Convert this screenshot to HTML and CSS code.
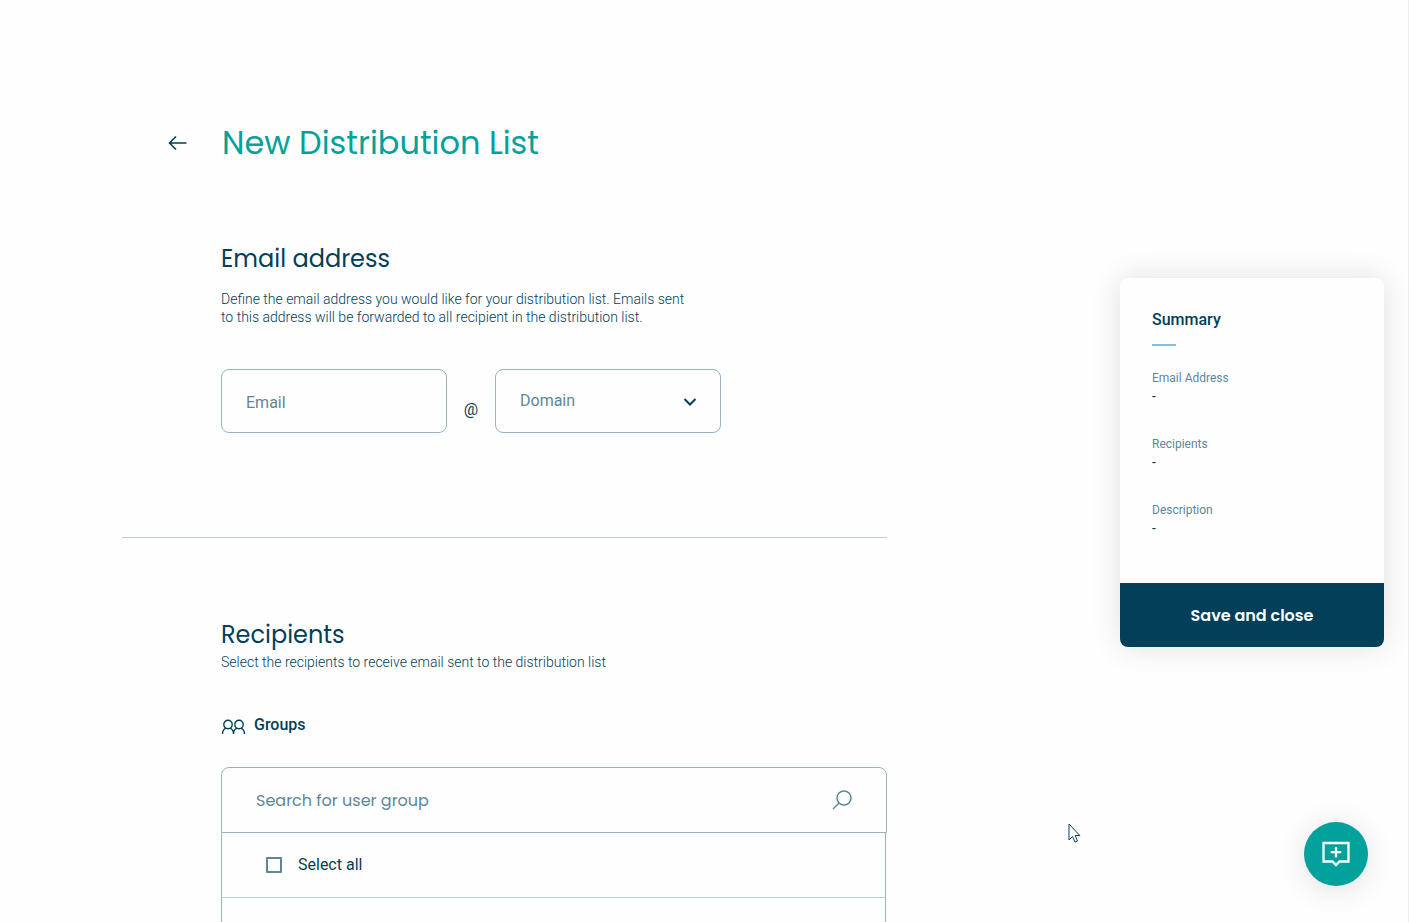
FILE: index.html
```html
<!DOCTYPE html>
<html lang="en">
<head>
    <meta charset="UTF-8">
    <meta name="viewport" content="width=device-width, initial-scale=1.0">
    <title>New Distribution List</title>
    <link rel="stylesheet" href="styles.css">
</head>
<body>

    <div class="page">
        <main class="content">
            <header class="page-header">
                <a class="back" href="#" aria-label="Back">
                    <svg width="20" height="16" viewBox="0 0 20 16"><path d="M18.500 8H2M8 1.500L1.500 8L8 14.500"/></svg>
                </a>
                <h1>New Distribution List</h1>
            </header>

            <section class="section email-section">
                <h2>Email address</h2>
                <p class="hint email-hint">Define the email address you would like for your distribution list. Emails sent<br>to this address will be forwarded to all recipient in the distribution list.</p>

                <div class="address">
                    <input class="field" type="text" placeholder="Email" aria-label="Email">
                    <span class="at">@</span>
                    <div class="select-wrap">
                        <select class="field" aria-label="Domain">
                            <option>Domain</option>
                        </select>
                        <svg class="chevron" width="14" height="10" viewBox="0 0 14 10"><path d="M1.500 2L7 7.500L12.500 2"/></svg>
                    </div>
                </div>
            </section>

            <section class="section recipients-section">
                <h2>Recipients</h2>
                <p class="hint">Select the recipients to receive email sent to the distribution list</p>

                <h3>
                    <svg width="25" height="16" viewBox="0 0 25 16">
                        <circle cx="7" cy="5.500" r="4.200"/>
                        <circle cx="18" cy="5.500" r="4.200"/>
                        <path d="M1.500 15C1.500 12 3 10 5 9.200M9 9.200C11 10 12.500 12 12.500 15C12.500 12 14 10 16 9.200M20 9.200C22 10 23.500 12 23.500 15"/>
                    </svg>
                    Groups
                </h3>

                <div class="search">
                    <input type="text" placeholder="Search for user group" aria-label="Search for user group">
                    <svg width="20" height="20" viewBox="0 0 20 20"><circle cx="12" cy="8" r="7"/><path d="M7 13L1 19"/></svg>
                </div>
                <div class="group-list">
                    <label class="row">
                        <input type="checkbox">
                        <span>Select all</span>
                    </label>
                </div>
            </section>
        </main>

        <aside class="summary">
            <div class="summary-body">
                <h4>Summary</h4>
                <dl>
                    <dt>Email Address</dt>
                    <dd>-</dd>
                    <dt>Recipients</dt>
                    <dd>-</dd>
                    <dt>Description</dt>
                    <dd>-</dd>
                </dl>
            </div>
            <button class="save" type="button">Save and close</button>
        </aside>
    </div>

    <button class="feedback" type="button" aria-label="Send feedback">
        <svg width="28" height="26" viewBox="0 0 28 26"><path d="M1.500 2H26.500V20.500H17.500L14 24L10.500 20.500H1.500ZM14 6V16.500M8.700 11.200H19.300"/></svg>
    </button>

    <svg class="pointer" width="13" height="20" viewBox="0 0 13 20"><path d="M1 1V17L4.500 13.500L7 19L9.500 18L7.200 12.500H11.800Z"/></svg>

</body>
</html>
```

FILE: styles.css
```css
* { margin: 0; padding: 0; box-sizing: border-box; }

:root {
    --navy: #024059;
    --teal: #03a19b;
    --slate: #5d8799;
    --line: #98b4bf;
    --heading: Poppins, Inter, sans-serif;
}

body {
    background: #fefefe;
    color: var(--navy);
    font-family: Roboto, sans-serif;
    font-size: 16px;
}

svg { fill: none; stroke: currentColor; flex-shrink: 0; }
input, select, button { font: inherit; color: inherit; outline: none; }

.page {
    display: flex;
    justify-content: space-between;
    align-items: flex-start;
    gap: 48px;
    min-height: 100vh;
    padding: 119px 24px 0 122px;
    border-right: 1px solid #ededed;
}

/* --- MAIN COLUMN --- */
.content {
    flex: 1;
    align-self: stretch;
    max-width: 765px;
    display: flex;
    flex-direction: column;
}

.page-header { display: flex; align-items: center; padding-left: 46px; }
.back { display: flex; width: 54px; color: var(--navy); }
.back svg { stroke-width: 1.6; }

h1 {
    font-family: var(--heading);
    font-size: 32px;
    line-height: 48px;
    font-weight: 400;
    color: var(--teal);
}

h2 {
    font-family: var(--heading);
    font-size: 24px;
    line-height: 36px;
    font-weight: 400;
}

.section { padding-left: 99px; }
.email-section { padding-top: 74px; padding-bottom: 104px; border-bottom: 1px solid #c4cccf; }
.recipients-section { flex: 1; display: flex; flex-direction: column; padding-top: 79px; }

.hint { font-size: 14px; line-height: 18px; font-weight: 300; }
.email-hint { margin: 13px 0 43px; }

/* --- EMAIL FIELDS --- */
.address {
    display: grid;
    grid-template-columns: 1fr 48px 1fr;
    align-items: center;
    width: 500px;
    max-width: 100%;
}
.at { padding-top: 16px; text-align: center; }
.select-wrap { position: relative; }

.field {
    display: block;
    width: 100%;
    height: 64px;
    padding: 0 24px;
    border: 1px solid var(--line);
    border-radius: 8px;
    background: transparent;
    color: var(--slate);
    appearance: none;
}
input.field { padding-top: 2px; }
select.field { padding-bottom: 2px; }

::placeholder { color: var(--slate); opacity: 1; }

/* Chevron sits over the native select */
.chevron {
    position: absolute;
    right: 24px;
    top: 28px;
    stroke-width: 2;
    pointer-events: none;
}

/* --- GROUPS --- */
h3 {
    display: flex;
    align-items: center;
    gap: 8px;
    margin: 42px 0 30px;
    font-size: 16px;
    line-height: 24px;
    font-weight: 500;
}
h3 svg { stroke-width: 1.4; margin-top: 4px; }

.search {
    display: flex;
    align-items: center;
    height: 66px;
    padding: 0 34px;
    border: 1px solid var(--line);
    border-radius: 8px 8px 0 0;
    color: var(--slate);
}
.search input {
    flex: 1;
    min-width: 0;
    border: 0;
    background: transparent;
    font-family: var(--heading);
}
.search svg { stroke-width: 1.5; }

.group-list {
    flex: 1;
    margin-right: 1px;
    border: solid var(--line);
    border-width: 0 1px;
}

.row {
    display: flex;
    align-items: center;
    gap: 16px;
    height: 65px;
    padding-left: 44px;
    border-bottom: 1px solid #bdd0d6;
}
.row input {
    width: 16px;
    height: 16px;
    border: 2px solid var(--slate);
    border-radius: 1px;
    appearance: none;
}
.row span { padding-bottom: 2px; }

/* --- SUMMARY CARD --- */
.summary {
    width: 264px;
    flex-shrink: 0;
    margin-top: 159px;
    border-radius: 8px;
    background: #fefefe;
    box-shadow: 0 0 30px rgba(0, 0, 0, 0.12);
    overflow: hidden;
}
.summary-body { padding: 32px 32px 40px; }

h4 { font-size: 16px; line-height: 20px; font-weight: 500; }
h4::after {
    content: "";
    display: block;
    width: 24px;
    height: 2px;
    margin: 14px 0 24px;
    background: #8bbbd9;
}

dt { font-size: 12px; line-height: 16px; color: var(--slate); }
dd { font-size: 14px; line-height: 20px; margin-bottom: 30px; }
dd:last-child { margin-bottom: 0; padding-bottom: 5px; }

.save {
    display: block;
    width: 100%;
    height: 64px;
    border: 0;
    background: var(--navy);
    color: #fff;
    font-family: var(--heading);
    font-weight: 600;
}

/* --- FLOATING BUTTON --- */
.feedback {
    position: fixed;
    right: 41px;
    bottom: 36px;
    display: flex;
    align-items: center;
    justify-content: center;
    width: 64px;
    height: 64px;
    border: 0;
    border-radius: 50%;
    background: var(--teal);
    color: #fff;
    box-shadow: 0 4px 30px rgba(0, 0, 0, 0.12);
}
.feedback svg { stroke-width: 2.3; }

.pointer { position: absolute; left: 1068px; top: 823px; fill: #fff; }
```
